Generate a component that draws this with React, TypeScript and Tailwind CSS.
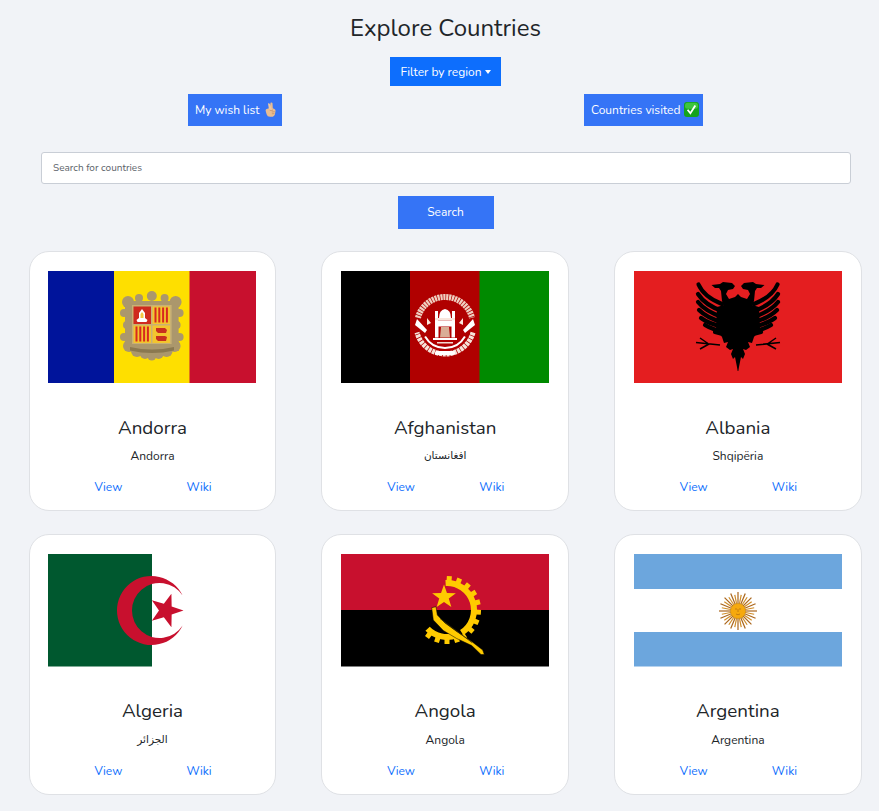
import type { ReactNode } from "react";

const starPoints = (cx: number, cy: number, R: number, r: number, rot: number) => {
  const pts: string[] = [];
  for (let i = 0; i < 10; i++) {
    const a = ((rot + i * 36) * Math.PI) / 180;
    const d = i % 2 === 0 ? R : r;
    pts.push(`${(cx + d * Math.cos(a)).toFixed(2)},${(cy + d * Math.sin(a)).toFixed(2)}`);
  }
  return pts.join(" ");
};

const range = (n: number) => Array.from({ length: n }, (_, i) => i);

const arc = (cx: number, cy: number, r: number, from: number, to: number) => {
  const p = (deg: number) => {
    const a = (deg * Math.PI) / 180;
    return `${(cx + r * Math.cos(a)).toFixed(2)} ${(cy + r * Math.sin(a)).toFixed(2)}`;
  };
  return `M${p(from)} A${r} ${r} 0 ${to - from > 180 ? 1 : 0} 1 ${p(to)}`;
};

function FlagFrame({ children }: { children: ReactNode }) {
  return (
    <svg viewBox="0 0 208 112.5" className="block w-[208px] h-[112.5px]">
      {children}
    </svg>
  );
}

const lobes = [
  [80, 31, 6],
  [76, 42, 4],
  [79, 54, 4],
  [76, 66, 4],
  [81, 75, 6],
  [89, 80, 6],
  [97, 83, 5],
  [91, 27, 4],
];

function Andorra() {
  const stripes = (x: number, y: number) =>
    range(4).map((i) => <rect key={i} x={x + 2 + i * 3.8} y={y + 1} width="2" height="15" fill="#d8281f" />);
  return (
    <FlagFrame>
      <rect width="208" height="112.5" fill="#fedf00" />
      <rect width="66" height="112.5" fill="#00149b" />
      <rect x="141.5" width="66.5" height="112.5" fill="#c8102e" />
      {/* scroll work round the shield */}
      <g fill="#ab976c">
        {lobes.map(([x, y, r]) => (
          <g key={`${x}-${y}`}>
            <circle cx={x} cy={y} r={r} />
            <circle cx={207.6 - x} cy={y} r={r} />
          </g>
        ))}
        <circle cx="103.8" cy="25" r="5" />
        <circle cx="103.8" cy="85" r="4.5" />
      </g>
      <rect x="77" y="30" width="53.6" height="50" fill="#ab976c" />
      <rect x="84" y="34" width="39.6" height="39" fill="#c9b174" />
      <rect x="85.5" y="35.5" width="17.5" height="17.5" fill="#cf2a1e" />
      <path d="M94 38 l3 4 0 5 2.5 2 -1 2 -9 0 -1 -2 2.5 -2 0 -5 z" fill="#fff" />
      <path d="M94 41 l1.5 2 0 4 -3 0 0 -4 z" fill="#f5c842" />
      <rect x="104.5" y="35.5" width="17.5" height="17.5" fill="#f3c52e" />
      {stripes(104.5, 35.5)}
      <rect x="85.5" y="54.5" width="17.5" height="17.5" fill="#f3c52e" />
      {stripes(85.5, 54.5)}
      <rect x="104.5" y="54.5" width="17.5" height="17.5" fill="#f3c52e" />
      <path d="M108 57 h9 l2 2 -1 3 h-8 l-2 -2 z M108 65 h9 l2 1 -1 4 h-8 l-2 -2 z" fill="#c8301e" />
      <path d="M82 76 q22 5 44 0 l0 3.5 q-22 5 -44 0 z" fill="#8a7850" />
    </FlagFrame>
  );
}

function Afghanistan() {
  return (
    <FlagFrame>
      <rect width="69.5" height="112.5" fill="#000" />
      <rect x="69" width="70" height="112.5" fill="#b00000" />
      <rect x="138.5" width="69.5" height="112.5" fill="#008a00" />
      {/* wreath */}
      <path d={arc(104, 54, 28, -165, -15)} fill="none" stroke="#efcfc0" strokeWidth="6" strokeDasharray="2.2 0.7" />
      <path d={arc(104, 54, 29, 15, 165)} fill="none" stroke="#f6e4da" strokeWidth="5" strokeDasharray="3 0.7" />
      <path d={arc(104, 54, 23, 30, 150)} fill="none" stroke="#fff" strokeWidth="2" />
      <path d="M76 48 l10 11 -2 3 -10 -8 z M132 48 l-10 11 2 3 10 -8 z" fill="#fff" />
      <path d="M86 47 l4 5 -4 2 z M122 47 l-4 5 4 2 z" fill="#fbe6dc" />
      {/* mosque */}
      <path d="M98 47 q0 -8 6 -9 q6 1 6 9 z" fill="#fff" />
      <rect x="94" y="40" width="3" height="10" fill="#fff" />
      <rect x="111" y="40" width="3" height="10" fill="#fff" />
      <rect x="94" y="47" width="20" height="2.5" fill="#f8e5dc" />
      <path d="M94 49.5 h20 v17 h-3.5 v-11 h-13 v11 h-3.5 z" fill="#fff" />
      <path d="M100 56 h8 l1 10.5 h-10 z" fill="#d9ae96" />
      <rect x="92" y="67" width="24" height="2" fill="#fff" />
      <rect x="96" y="71" width="16" height="1.5" fill="#f3d9cf" />
      <rect x="94" y="80" width="20" height="4" rx="1.5" fill="#fff" />
    </FlagFrame>
  );
}

function Albania() {
  const feathers = [
    "M64.5 13.5 Q70 26 88 33",
    "M64 23 Q71 34 88 40",
    "M64 31 Q71 40 88 46",
    "M65 39 Q73 47 88 51",
    "M67 47 Q75 53 90 56",
    "M71 54 Q79 59 91 61",
    "M81 61 Q85 62 92 64",
  ];
  const half = (
    <g>
      {feathers.map((d) => (
        <path key={d} d={d} fill="none" stroke="#000" strokeWidth="4.2" strokeLinecap="round" />
      ))}
      {/* head and neck */}
      <path d="M77.5 14 L86 13 L89 11 L98 12 L101 15 L99 18 L94 19 L92 23 L95 28 L101 26 L104 23 L104 40 L92 40 L88 30 L87 20 L85 17 L81 17 z" fill="#000" />
      {/* body and tail */}
      <path d="M104 30 L83 36 L82 58 L88 66 L90 72 L94 71 L92 76 L96 79 L99 78 L97 83 L99 88 L101 86 L103.8 100 L104.2 100 z" fill="#000" />
      {/* legs */}
      <path d="M62 71.5 L86 74 M66 67 L74 72.5 M66 78 L75 73" stroke="#000" strokeWidth="1.5" fill="none" />
    </g>
  );
  return (
    <FlagFrame>
      <rect width="208" height="112.5" fill="#e41e20" />
      {half}
      <g transform="translate(208 0) scale(-1 1)">{half}</g>
    </FlagFrame>
  );
}

function Algeria() {
  return (
    <FlagFrame>
      <rect width="208" height="112.5" fill="#fff" />
      <rect width="104" height="112.5" fill="#00582f" />
      <path d="M134.6 41.6 A34.5 34.5 0 1 0 134.6 71.4 A27.5 27.5 0 1 1 134.6 41.6 z" fill="#c8102e" />
      <polygon points={starPoints(118, 56.5, 17.5, 7, 0)} fill="#c8102e" />
    </FlagFrame>
  );
}

function Angola() {
  const teeth = [-86, -68, -50, -32, -14, 4, 22, 40, 58, 72, 90, 108, 126];
  return (
    <FlagFrame>
      <rect width="208" height="56.5" fill="#c8102e" />
      <rect y="56" width="208" height="56.5" fill="#000" />
      {/* gear: upper right arc and lower left arc */}
      <path d={arc(106, 56, 27, -93, 57)} fill="none" stroke="#ffcb00" strokeWidth="6" />
      <path d={arc(106, 56, 27, 68, 136)} fill="none" stroke="#ffcb00" strokeWidth="6" />
      {teeth.map((t) => (
        <rect
          key={t}
          x="-2.5"
          y="-34"
          width="5"
          height="5"
          fill="#ffcb00"
          transform={`translate(106 56) rotate(${t + 90})`}
        />
      ))}
      <polygon points={starPoints(103, 43, 12.5, 5, -90)} fill="#ffcb00" />
      {/* machete */}
      <path
        d="M90.7 53.7 L95 52.7 L96.3 61 L104 69 L115.7 77.5 L130.7 87.5 L141.7 96 L143.3 100.5 L140 100.5 L130.7 91.5 L115.7 84.5 L102.3 76.5 L92.3 66 z"
        fill="#ffcb00"
        stroke="#000"
        strokeWidth="0.5"
      />
      <path d="M99 64.5 L131 88.5" stroke="#3a2d00" strokeWidth="0.8" />
    </FlagFrame>
  );
}

function Argentina() {
  return (
    <FlagFrame>
      <rect width="208" height="112.5" fill="#6ca6dd" />
      <rect y="35" width="208" height="43" fill="#fff" />
      <g transform="translate(104 57)">
        {range(32).map((i) => (
          <line
            key={i}
            x1="0"
            y1="0"
            x2="0"
            y2={i % 2 === 0 ? -19 : -16.5}
            stroke={i % 2 === 0 ? "#a9651c" : "#d08d28"}
            strokeWidth="1.2"
            transform={`rotate(${i * 11.25})`}
          />
        ))}
        <circle r="7.5" fill="#f6a90e" stroke="#c98a12" strokeWidth="0.5" />
        <path d="M-3 -2 h2 M1 -2 h2 M0 -2 v3 M-2 3 q2 1.5 4 0" stroke="#b06a10" strokeWidth="0.7" fill="none" />
      </g>
    </FlagFrame>
  );
}

function FingerEmoji() {
  return (
    <svg viewBox="0 0 11 15" className="absolute left-[77px] top-[8px] w-[11px] h-[15px]">
      <path
        d="M5.5 0.8 q1.5 -1 2 0.4 l0.3 5 l1.6 0.7 q1.3 0.6 1.1 2 l-0.5 3 q-0.6 2.8 -3.5 2.8 h-1.5 q-2.8 0 -3.4 -2.5 l-0.9 -3.3 q-0.3 -1.4 0.9 -1.9 l3.2 -0.9 z"
        fill="#e8bd92"
      />
      <path d="M3 1.4 q1.2 -0.6 1.8 0.6 l2 5.5 l-2.6 1 z" fill="#edc8a2" />
      <path d="M4.5 8 q1.6 1.4 3.5 0 M6.8 10 l3 -0.3 M6.8 11.8 l2.6 -0.2" stroke="#b5794a" strokeWidth="0.5" fill="none" />
    </svg>
  );
}

function CheckEmoji() {
  return (
    <svg viewBox="0 0 15 15" className="absolute left-[100px] top-[8px] w-[15px] h-[15px]">
      <rect x="0" y="0" width="15" height="15" rx="3" fill="#14a31c" />
      <rect x="1" y="0.8" width="13" height="6" rx="2.5" fill="#3ec43f" />
      <path d="M3.6 7.8 L6.4 11.3 L11.3 3.6" fill="none" stroke="#fff" strokeWidth="1.8" />
    </svg>
  );
}

const countries = [
  { name: "Andorra", native: "Andorra", small: false, flag: <Andorra /> },
  { name: "Afghanistan", native: "افغانستان", small: true, flag: <Afghanistan /> },
  { name: "Albania", native: "Shqipëria", small: false, flag: <Albania /> },
  { name: "Algeria", native: "الجزائر", small: true, flag: <Algeria /> },
  { name: "Angola", native: "Angola", small: false, flag: <Angola /> },
  { name: "Argentina", native: "Argentina", small: false, flag: <Argentina /> },
];

export default function App() {
  return (
    <div className="min-h-[811px] overflow-hidden bg-[#f1f3f7] font-['Nunito','Lato','DejaVu_Sans',sans-serif] text-[#212529]">
      <h1 className="pt-[13px] pl-[12px] text-center text-[24px] leading-[30px]">Explore Countries</h1>

      <div className="mt-[14px] flex justify-center pl-[12px]">
        <button className="flex h-[29px] w-[111px] items-center justify-center bg-[#0d6efd] text-[12px] text-white">
          Filter by region
          <span className="ml-[3px] h-0 w-0 border-x-[3.5px] border-t-[4px] border-x-transparent border-t-white" />
        </button>
      </div>

      <div className="mt-[8px] flex justify-between pl-[188px] pr-[176px]">
        <button className="relative h-[32px] w-[94px] bg-[#3574f6] pl-[7px] text-left text-[12px] leading-[31px] text-white">
          My wish list
          <FingerEmoji />
        </button>
        <button className="relative h-[32px] w-[119px] bg-[#3574f6] pl-[7px] text-left text-[12px] leading-[31px] text-white">
          Countries visited
          <CheckEmoji />
        </button>
      </div>

      <div className="mt-[26px] pl-[41px] pr-[28px]">
        <input
          placeholder="Search for countries"
          className="block h-[32px] w-full rounded-[3px] border border-[#c9ced6] bg-white pl-[11px] pr-3 text-[10px] placeholder:text-[#5c636a]"
        />
      </div>

      <div className="mt-[12px] flex justify-center pl-[12px]">
        <button className="h-[33px] w-[96px] bg-[#3574f6] pb-[2px] text-[12px] text-white">Search</button>
      </div>

      <div className="mt-[21.6px] ml-[28.8px] grid grid-cols-[247.7px_247.7px_247.7px] gap-x-[45px] gap-y-[23px]">
        {countries.map((c) => (
          <div
            key={c.name}
            className="flex h-[260.6px] flex-col rounded-[20px] border border-[#dfe1e5] bg-white pl-[18.7px] pt-[19px]"
          >
            {c.flag}
            <h2 className="mt-[31.6px] w-[208px] text-center text-[18.8px] leading-[26px]">{c.name}</h2>
            <p className={`mt-[7.4px] w-[208px] text-center leading-[16px] ${c.small ? "text-[10.5px]" : "text-[12px]"}`}>
              {c.native}
            </p>
            <div className="mt-[14px] flex text-[12px] leading-[18px] text-[#0d6efd]">
              <a className="ml-[46px] w-[27px] text-center">View</a>
              <a className="ml-[65px] w-[25px] text-center whitespace-nowrap">Wiki</a>
            </div>
          </div>
        ))}
      </div>
    </div>
  );
}
